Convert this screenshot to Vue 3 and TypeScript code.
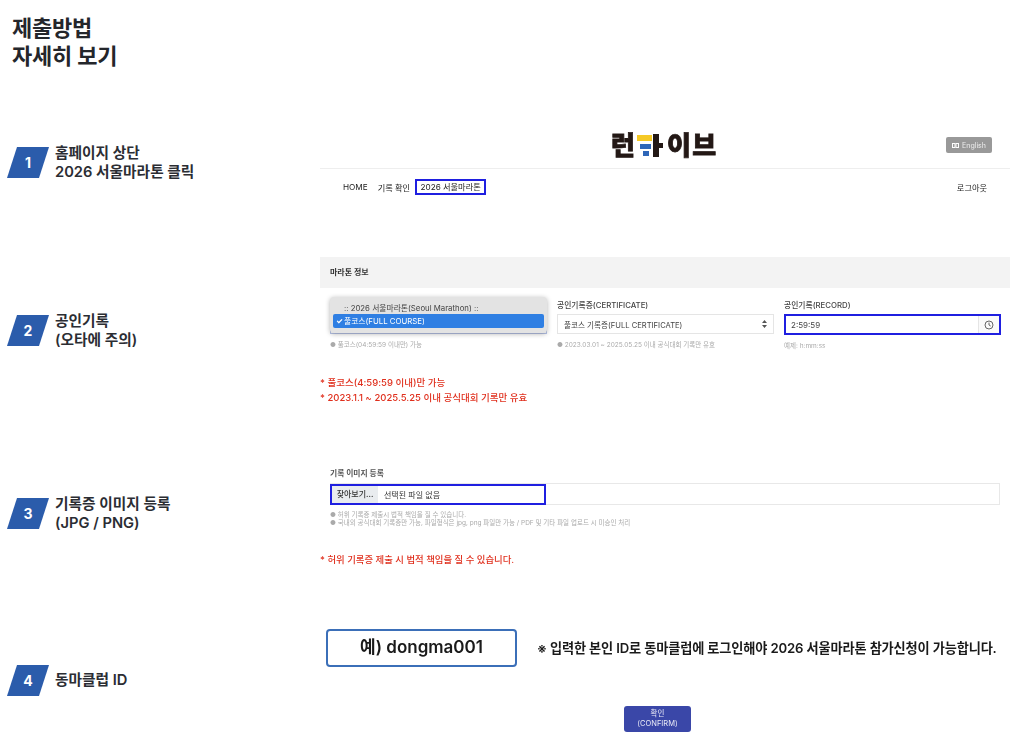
<template>
  <div class="page">
    <h1 class="title">제출방법<br />자세히 보기</h1>

    <div v-for="step in steps" :key="step.no" class="row" :class="`row-${step.no}`">
      <div class="step">
        <span class="badge"><b>{{ step.no }}</b></span>
        <p class="step-text">{{ step.line1 }}<template v-if="step.line2"><br />{{ step.line2 }}</template></p>
      </div>

      <div class="shot">
        <template v-if="step.no === 1">
          <div class="head">
            <div class="logo">
              <span>런</span>
              <svg class="logo-mark" width="28" height="25" viewBox="0 0 28 25">
                <rect x="0" y="2" width="15" height="6" fill="#f5c926" />
                <rect x="3" y="11" width="11" height="5" fill="#2e66b8" />
                <rect x="6" y="18" width="6" height="5" fill="#2e66b8" />
                <rect x="16" y="1" width="6" height="23" fill="#231815" />
                <rect x="22" y="10" width="4" height="5" fill="#231815" />
              </svg>
              <span class="logo-end">이브</span>
            </div>
            <span class="lang">
              <svg width="7" height="5" viewBox="0 0 7 5"><rect x=".5" y=".5" width="2.5" height="4" fill="none" stroke="#fff" /><rect x="4" y=".5" width="2.5" height="4" fill="none" stroke="#fff" /></svg>
              English
            </span>
          </div>
          <nav class="nav">
            <a>HOME</a>
            <a>기록 확인</a>
            <a class="hl nav-hl">2026 서울마라톤</a>
            <a class="logout">로그아웃</a>
          </nav>
        </template>

        <template v-else-if="step.no === 2">
          <div class="band">마라톤 정보</div>
          <div class="fields">
            <div class="field">
              <div class="label">&nbsp;</div>
              <div class="input sel-base"></div>
              <p class="hint">● 풀코스(04:59:59 이내만) 가능</p>
              <div class="popup">
                <div class="opt">:: 2026 서울마라톤(Seoul Marathon) ::</div>
                <div class="opt opt-on"><i>✓</i>풀코스(FULL COURSE)</div>
              </div>
            </div>
            <div class="field">
              <div class="label">공인기록증(CERTIFICATE)</div>
              <div class="input">
                <span>풀코스 기록증(FULL CERTIFICATE)</span>
                <svg class="updown" width="5" height="8" viewBox="0 0 5 8"><path d="M2.5 0 5 3H0ZM2.5 8 0 5h5Z" fill="#555" /></svg>
              </div>
              <p class="hint">● 2023.03.01 ~ 2025.05.25 이내 공식대회 기록만 유효</p>
            </div>
            <div class="field">
              <div class="label">공인기록(RECORD)</div>
              <div class="input hl record">
                <span>2:59:59</span>
                <span class="clock">
                  <svg width="10" height="10" viewBox="0 0 10 10" fill="none" stroke="#555" stroke-width=".9"><circle cx="5" cy="5" r="4" /><path d="M5 2.6V5l1.7 1" /></svg>
                </span>
              </div>
              <p class="hint">예제: h:mm:ss</p>
            </div>
          </div>
          <div class="red red-two">
            <p>* 풀코스(4:59:59 이내)만 가능</p>
            <p>* 2023.1.1 ~ 2025.5.25 이내 공식대회 기록만 유효</p>
          </div>
        </template>

        <template v-else-if="step.no === 3">
          <div class="upload">
            <div class="label upload-label">기록 이미지 등록</div>
            <div class="file">
              <div class="hl file-hl">
                <span class="browse">찾아보기...</span>
                <span class="file-name">선택된 파일 없음</span>
              </div>
            </div>
            <p class="hint tight first">● 허위 기록증 제출시 법적 책임을 질 수 있습니다.</p>
            <p class="hint tight">● 국내외 공식대회 기록증만 가능, 파일형식은 jpg, png 파일만 가능 / PDF 및 기타 파일 업로드 시 미승인 처리</p>
          </div>
          <div class="red red-one"><p>* 허위 기록증 제출 시 법적 책임을 질 수 있습니다.</p></div>
        </template>

        <template v-else>
          <div class="id-row">
            <div class="id-box">예) dongma001</div>
            <p class="id-note">※ 입력한 본인 ID로 동마클럽에 로그인해야 2026 서울마라톤 참가신청이 가능합니다.</p>
          </div>
          <div class="confirm-wrap">
            <button class="confirm">확인<br />(CONFIRM)</button>
          </div>
        </template>
      </div>
    </div>
  </div>
</template>

<script setup lang="ts">
interface Step {
  no: number
  line1: string
  line2?: string
}

const steps: Step[] = [
  { no: 1, line1: '홈페이지 상단', line2: '2026 서울마라톤 클릭' },
  { no: 2, line1: '공인기록', line2: '(오타에 주의)' },
  { no: 3, line1: '기록증 이미지 등록', line2: '(JPG / PNG)' },
  { no: 4, line1: '동마클럽 ID' },
]
</script>

<style>
body {
  background: #fff;
}
</style>

<style scoped>
.page {
  width: 1024px;
  height: 742px;
  overflow: hidden;
  font-family: Inter, "Noto Sans CJK KR", sans-serif;
  color: #2b2d33;
}
p,
h1 {
  margin: 0;
}
.title {
  height: 125px;
  box-sizing: border-box;
  padding: 14px 0 0 12px;
  font-size: 22px;
  line-height: 28px;
  font-weight: 700;
  letter-spacing: -0.2px;
  color: #24262b;
}
.row {
  display: grid;
  grid-template-columns: 320px 690px;
}
.row-1 { height: 132px; }
.row-2 { height: 208px; }
.row-3 { height: 160px; }
.row-4 { height: 117px; }

.step {
  display: flex;
  align-items: flex-start;
  padding-left: 7px;
  gap: 6px;
}
.row-1 .step { padding-top: 22px; }
.row-2 .step { padding-top: 58px; }
.row-3 .step { padding-top: 33px; }
.row-4 .step { padding-top: 40px; }
.badge {
  width: 42px;
  height: 31px;
  flex: none;
  display: flex;
  align-items: center;
  justify-content: center;
  background: #2b5cab;
  clip-path: polygon(10px 0, 100% 0, calc(100% - 10px) 100%, 0 100%);
  color: #fff;
  font-size: 14px;
}
.badge b {
  font-weight: 700;
}
.step-text {
  font-size: 14.7px;
  line-height: 19px;
  font-weight: 600;
  margin-top: -3px;
  white-space: nowrap;
}
.row-4 .step-text {
  margin-top: 6px;
}

.shot {
  filter: blur(0.35px);
  font-size: 8px;
  color: #333;
}
.hl {
  border: 2px solid #1f1fe0;
  box-sizing: border-box;
}

/* row 1 */
.head {
  height: 43px;
  border-bottom: 1px solid #eee;
  display: flex;
  align-items: flex-start;
  position: relative;
}
.logo {
  margin: 8px 0 0 291px;
  display: flex;
  align-items: center;
  height: 25px;
  font-size: 26px;
  line-height: 25px;
  font-weight: 900;
  color: #231815;
  -webkit-text-stroke: 0.8px #231815;
}
.logo-mark {
  margin: 0 2px 0 2px;
}
.logo-end {
  letter-spacing: 1.5px;
}
.lang {
  margin: 12px 18px 0 auto;
  width: 46px;
  height: 16px;
  background: #999;
  border-radius: 2px;
  color: #eee;
  font-size: 7px;
  display: flex;
  align-items: center;
  justify-content: center;
  gap: 3px;
}
.nav {
  display: flex;
  align-items: center;
  padding: 10px 23px 0 23px;
  gap: 10px;
  font-size: 8.2px;
  color: #222;
}
.nav-hl {
  margin-left: -5px;
  width: 71px;
  height: 16px;
  line-height: 12px;
  text-align: center;
  white-space: nowrap;
}
.logout {
  margin-left: auto;
}

/* row 2 */
.band {
  height: 31px;
  background: #f3f3f3;
  padding-left: 10px;
  line-height: 30px;
  font-weight: 700;
  color: #333;
}
.fields {
  display: grid;
  grid-template-columns: repeat(3, 217px);
  gap: 10px;
  padding: 8px 10px 0;
}
.field {
  position: relative;
}
.label {
  height: 18px;
  line-height: 18px;
  font-size: 7.8px;
  font-weight: 500;
  color: #444;
}
.input {
  height: 20px;
  box-sizing: border-box;
  border: 1px solid #e5e5e5;
  display: flex;
  align-items: center;
  justify-content: space-between;
  padding: 0 5px 0 6px;
  font-size: 7.6px;
  color: #444;
}
.sel-base {
  border-color: #b9c6ea;
}
.updown {
  margin-right: 1px;
}
.record {
  border: 2px solid #1f1fe0;
  padding: 0 0 0 5px;
  height: 21px;
  font-size: 8px;
}
.clock {
  width: 20px;
  height: 100%;
  border-left: 1px solid #e5e5e5;
  background: #fafafa;
  display: flex;
  align-items: center;
  justify-content: center;
}
.hint {
  margin-top: 7px;
  font-size: 6.5px;
  line-height: 9px;
  color: #aaa;
  white-space: nowrap;
}
.popup {
  position: absolute;
  left: 0;
  top: 1px;
  width: 217px;
  height: 36px;
  box-sizing: border-box;
  padding: 5px 3px 0;
  background: #e3e3e3;
  border-radius: 4px;
  box-shadow: 0 1px 5px rgba(0, 0, 0, 0.3);
}
.opt {
  height: 13px;
  line-height: 13px;
  padding-left: 11px;
  font-size: 7.8px;
  color: #444;
  white-space: nowrap;
}
.opt-on {
  margin-top: -1px;
  height: 14px;
  line-height: 14px;
  position: relative;
  background: #2f7fe3;
  color: #fff;
  border-radius: 2px;
}
.opt-on i {
  position: absolute;
  left: 3px;
  font-style: normal;
  font-weight: 700;
}
.red {
  color: #e0301e;
  font-size: 9.5px;
  line-height: 15px;
  font-weight: 500;
}
.red-two {
  margin-top: 24px;
}
.red-one {
  margin-top: 25px;
  font-size: 9.4px;
}

/* row 3 */
.upload {
  padding: 1px 10px 0;
}
.upload-label {
  height: 17px;
  line-height: 14px;
  font-weight: 700;
  color: #555;
}
.file {
  height: 20px;
  border: 1px solid #e8e8e8;
  border-left: 0;
}
.file-hl {
  width: 216px;
  height: 21px;
  display: flex;
  align-items: center;
  background: #fff;
}
.browse {
  width: 46px;
  height: 100%;
  background: #e9ecef;
  line-height: 17px;
  text-align: center;
  font-weight: 500;
}
.file-name {
  padding-left: 6px;
}
.tight {
  margin-top: 0;
  font-size: 6.5px;
  line-height: 8px;
  color: #aaa;
}
.tight.first {
  margin-top: 6px;
}

/* row 4 */
.id-row {
  display: flex;
  align-items: center;
  padding: 4px 0 0 6px;
  gap: 20px;
}
.id-box {
  width: 191px;
  height: 38px;
  box-sizing: border-box;
  border: 2px solid #3b6fb8;
  border-radius: 4px;
  text-align: center;
  line-height: 32px;
  font-size: 17px;
  font-weight: 600;
  color: #1a1a1a;
}
.id-note {
  font-size: 13.2px;
  font-weight: 600;
  color: #1a1a1a;
  white-space: nowrap;
  letter-spacing: -0.15px;
  margin-top: -1px;
}
.confirm-wrap {
  display: flex;
  padding: 39px 0 0 304px;
}
.confirm {
  width: 67px;
  height: 26px;
  padding: 0;
  border: 0;
  border-radius: 3px;
  background: #3a47a8;
  color: #e8e8f5;
  font-family: inherit;
  font-size: 7.5px;
  line-height: 10px;
}
</style>
